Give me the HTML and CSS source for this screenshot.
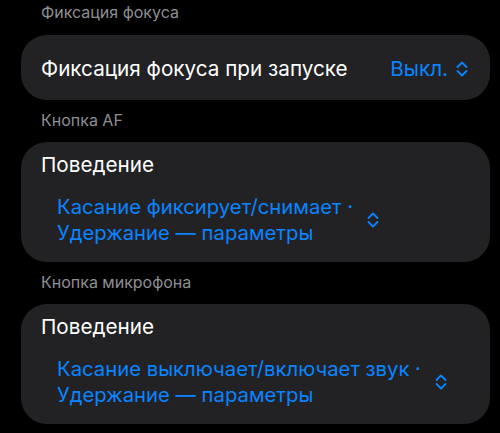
FILE: index.html
```html
<!DOCTYPE html>
<html lang="ru">
<head>
<meta charset="utf-8">
<link rel="stylesheet" href="styles.css">
</head>
<body>
<div class="page">
  <div class="section-title first">Фиксация фокуса</div>
  <div class="card card-row">
    <div class="label">Фиксация фокуса при запуске</div>
    <div class="value">
      <span>Выкл.</span>
      <svg class="chev" viewBox="0 0 12 16" width="12" height="16"><path d="M1.5 6 L6 1.5 L10.5 6 M1.5 10 L6 14.5 L10.5 10" fill="none" stroke="currentColor" stroke-width="1.8" stroke-linecap="round" stroke-linejoin="round"/></svg>
    </div>
  </div>

  <div class="section-title">Кнопка AF</div>
  <div class="card card-stack">
    <div class="label">Поведение</div>
    <div class="picker">
      <div class="picker-text">Касание фиксирует/снимает ·<br>Удержание — параметры</div>
      <svg class="chev" viewBox="0 0 12 16" width="12" height="16"><path d="M1.5 6 L6 1.5 L10.5 6 M1.5 10 L6 14.5 L10.5 10" fill="none" stroke="currentColor" stroke-width="1.8" stroke-linecap="round" stroke-linejoin="round"/></svg>
    </div>
  </div>

  <div class="section-title">Кнопка микрофона</div>
  <div class="card card-stack">
    <div class="label">Поведение</div>
    <div class="picker">
      <div class="picker-text">Касание выключает/включает звук ·<br>Удержание — параметры</div>
      <svg class="chev" viewBox="0 0 12 16" width="12" height="16"><path d="M1.5 6 L6 1.5 L10.5 6 M1.5 10 L6 14.5 L10.5 10" fill="none" stroke="currentColor" stroke-width="1.8" stroke-linecap="round" stroke-linejoin="round"/></svg>
    </div>
  </div>
</div>
</body>
</html>
```

FILE: styles.css
```css
html, body {
  margin: 0;
  padding: 0;
  background: #000;
}
body {
  font-family: Inter, "Noto Sans", "Liberation Sans", sans-serif;
  color: #fff;
  width: 500px;
  height: 433px;
  overflow: hidden;
}
.page {
  display: flex;
  flex-direction: column;
  padding: 0 10px 0 21px;
}
.section-title {
  font-size: 16px;
  line-height: 20px;
  color: #8e8e93;
  padding-left: 20px;
  margin: 10px 0 12px;
}
.section-title.first {
  margin-top: 2px;
  margin-bottom: 13px;
}
.card {
  background: #222224;
  border-radius: 26px;
}
.card-row {
  height: 65px;
  display: flex;
  align-items: center;
  justify-content: space-between;
  padding: 2px 22px 0 20px;
  box-sizing: border-box;
}
.label {
  font-size: 20.7px;
  line-height: 24px;
  color: #fff;
}
.value {
  display: flex;
  align-items: center;
  gap: 8px;
  color: #0a84ff;
  font-size: 20.7px;
  line-height: 24px;
}
.chev {
  display: block;
  color: #0a84ff;
  flex: none;
}
.card-stack {
  display: flex;
  flex-direction: column;
  padding: 11px 20px 16px;
  height: 120px;
  box-sizing: border-box;
}
.picker {
  display: flex;
  align-items: center;
  gap: 14px;
  margin-top: 17px;
  padding-left: 16px;
  color: #0a84ff;
}
.picker-text {
  font-size: 20.3px;
  line-height: 26px;
}
```
